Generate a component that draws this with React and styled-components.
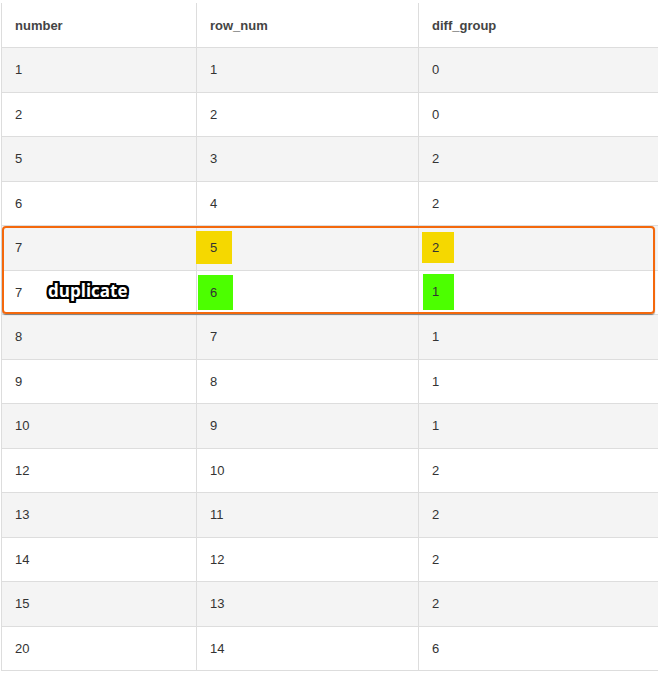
import React from 'react';
import styled, { createGlobalStyle } from 'styled-components';

const GlobalStyle = createGlobalStyle`
  body {
    margin: 0;
    background: #fff;
  }
`;

const COLORS = {
  border: '#dddddd',
  stripe: '#f4f4f4',
  text: '#333333',
  orange: '#f4680c',
  yellow: '#f5d800',
  green: '#4cff00',
};

const Wrap = styled.div`
  position: relative;
  padding: 3px 0 0 1px;
  width: 657px;
`;

const Table = styled.table`
  border-collapse: collapse;
  width: 657px;
  table-layout: fixed;
  font-family: Arial, "Liberation Sans", sans-serif;
  font-size: 13px;
  color: ${COLORS.text};
`;

const Row = styled.tr`
  height: 44.5px;
  background: ${(props) => (props.striped ? COLORS.stripe : '#fff')};
`;

const Head = styled.th`
  border: 1px solid ${COLORS.border};
  border-top: none;
  text-align: left;
  font-weight: 700;
  padding: 0 13px;
  color: #444;
`;

const Cell = styled.td`
  position: relative;
  border: 1px solid ${COLORS.border};
  padding: 0 13px;
`;

const Mark = styled.span`
  display: inline-block;
  background: ${(props) => COLORS[props.color]};
  width: ${(props) => props.w}px;
  height: ${(props) => props.h}px;
  line-height: ${(props) => props.h}px;
  margin-left: ${(props) => props.offset}px;
  padding-left: ${(props) => -props.offset}px;
  box-sizing: border-box;
  vertical-align: middle;
`;

const Label = styled.span`
  position: absolute;
  left: 46px;
  top: 50%;
  transform: translateY(-56%);
  font-family: "Open Sans", sans-serif;
  font-weight: 700;
  font-size: 17px;
  color: #fff;
  text-shadow:
    -2px 0 0 #000, 2px 0 0 #000, 0 -2px 0 #000, 0 2px 0 #000,
    -2px -2px 0 #000, 2px 2px 0 #000, -2px 2px 0 #000, 2px -2px 0 #000,
    -1px -2px 0 #000, 1px 2px 0 #000, -2px 1px 0 #000, 2px -1px 0 #000;
`;

const Frame = styled.div`
  position: absolute;
  left: 2px;
  top: 226px;
  width: 653px;
  height: 88px;
  box-sizing: border-box;
  border: 2px solid ${COLORS.orange};
  border-radius: 4px;
  box-shadow: 0 1px 1px rgba(0, 0, 0, 0.45);
  pointer-events: none;
`;

const rows = [
  [1, 1, 0],
  [2, 2, 0],
  [5, 3, 2],
  [6, 4, 2],
  [7, 5, 2],
  [7, 6, 1],
  [8, 7, 1],
  [9, 8, 1],
  [10, 9, 1],
  [12, 10, 2],
  [13, 11, 2],
  [14, 12, 2],
  [15, 13, 2],
  [20, 14, 6],
];

const marks = {
  4: [
    { color: 'yellow', w: 36, h: 33, offset: -14 },
    { color: 'yellow', w: 32, h: 31, offset: -10 },
  ],
  5: [
    { color: 'green', w: 35, h: 35, offset: -12 },
    { color: 'green', w: 31, h: 36, offset: -9 },
  ],
};

export default function App() {
  return (
    <Wrap>
      <GlobalStyle />
      <Table>
        <colgroup>
          <col style={{ width: 195 }} />
          <col style={{ width: 222 }} />
          <col style={{ width: 240 }} />
        </colgroup>
        <thead>
          <Row>
            <Head>number</Head>
            <Head>row_num</Head>
            <Head>diff_group</Head>
          </Row>
        </thead>
        <tbody>
          {rows.map((r, i) => {
            const m = marks[i];
            return (
              <Row key={i} striped={i % 2 === 0}>
                <Cell>
                  {r[0]}
                  {i === 5 && <Label>duplicate</Label>}
                </Cell>
                <Cell>{m ? <Mark {...m[0]}>{r[1]}</Mark> : r[1]}</Cell>
                <Cell>{m ? <Mark {...m[1]}>{r[2]}</Mark> : r[2]}</Cell>
              </Row>
            );
          })}
        </tbody>
      </Table>
      <Frame />
    </Wrap>
  );
}
